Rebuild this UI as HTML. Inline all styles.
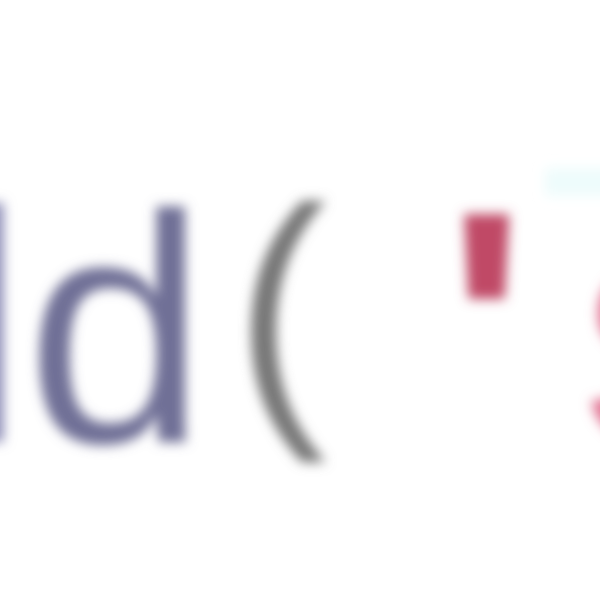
<!DOCTYPE html>
<html><head><style>
html,body{margin:0;padding:0;background:#fff;width:600px;height:600px;overflow:hidden}
svg{display:block}
text{font-family:"Liberation Sans",sans-serif}
</style></head><body>
<svg width="600" height="600" viewBox="0 0 600 600">
<defs><filter id="b" x="-20%" y="-20%" width="140%" height="140%"><feGaussianBlur stdDeviation="6"/></filter></defs>
<rect width="600" height="600" fill="#fff"/>
<g filter="url(#b)">
<rect x="545" y="168" width="70" height="28" fill="#eefcfc"/>
<text x="-48" y="442" font-size="330" fill="#8888b4">l</text>
<text transform="translate(26,442)" x="0" y="0" font-size="325" fill="#707096">d</text>
<text x="234" y="404" font-size="280" fill="#777">(</text>
<text transform="translate(446,448)" font-size="340" font-weight="bold" fill="#c04a66">'</text>
<text x="582" y="442" font-size="330" fill="#e07090">s</text>
</g>
</svg>
</body></html>
